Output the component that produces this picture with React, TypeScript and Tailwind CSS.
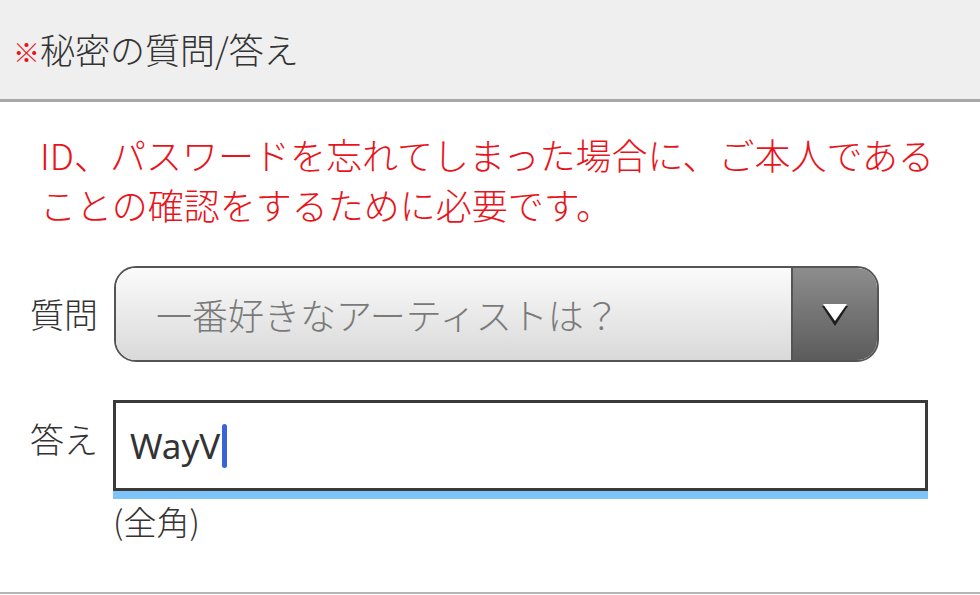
const jp = { fontFamily: '"Noto Sans CJK JP", "Noto Sans", sans-serif' }

function ArrowIcon() {
  return (
    <svg width="30" height="30" viewBox="0 0 30 30" aria-hidden>
      <polygon points="2,7 28,7 15,27" fill="#1e1e1e" />
      <polygon points="3,5 27,5 15,22" fill="#fff" />
    </svg>
  )
}

export default function App() {
  return (
    <div className="w-[980px] h-[595px] overflow-hidden bg-white text-[#333]" style={jp}>
      <div className="h-[102px] bg-[#efefef] border-b-[3px] border-[#a9a9a9] flex items-center pl-[13px] pb-[3px]">
        <span className="text-[27px] font-black text-[#e8141c] leading-none mt-[6px]">※</span>
        <span className="text-[35px] font-light leading-none text-[#333]">秘密の質問/答え</span>
      </div>

      <div className="pt-[27px]">
        <p className="px-[40px] text-[36px] font-light leading-[50px] text-[#e8141c]">
          ID、パスワードを忘れてしまった場合に、ご本人である
          <br />
          ことの確認をするために必要です。
        </p>

        <div className="mt-[37px] flex items-center">
          <div className="w-[114px] pl-[30px] text-[34px] font-light leading-none">質問</div>
          <div className="flex w-[765px] h-[96px] rounded-[22px] border-2 border-[#555] overflow-hidden">
            <div className="flex-1 flex items-center pl-[40px] bg-gradient-to-b from-[#fbfbfb] to-[#d9d9d9] text-[36px] font-light text-[#7a7a7a] border-r-2 border-[#555]">
              一番好きなアーティストは？
            </div>
            <div className="w-[84px] flex items-center justify-center bg-gradient-to-b from-[#8d8d8d] to-[#5c5c5c]">
              <ArrowIcon />
            </div>
          </div>
        </div>

        <div className="mt-[38px] flex items-start">
          <div className="w-[113px] pl-[30px] pt-[22px] text-[34px] font-light leading-none">答え</div>
          <div className="w-[815px]">
            <div className="h-[91px] border-[3px] border-[#3a3a3a] flex items-center pl-[14px]">
              <span className="text-[35px] leading-none text-[#333]" style={{ fontFamily: '"Noto Sans", "Noto Sans CJK JP", sans-serif' }}>WayV</span>
              <span className="ml-[2px] w-[5px] h-[44px] rounded-full bg-[#3b63d8]" />
            </div>
            <div className="h-[8px] bg-[#7fc4f8]" />
            <div className="mt-[2px] text-[33px] font-light leading-[40px]">(全角)</div>
          </div>
        </div>
      </div>

      <div className="mt-[51px] h-[2px] bg-[#b5b5b5]" />
    </div>
  )
}
